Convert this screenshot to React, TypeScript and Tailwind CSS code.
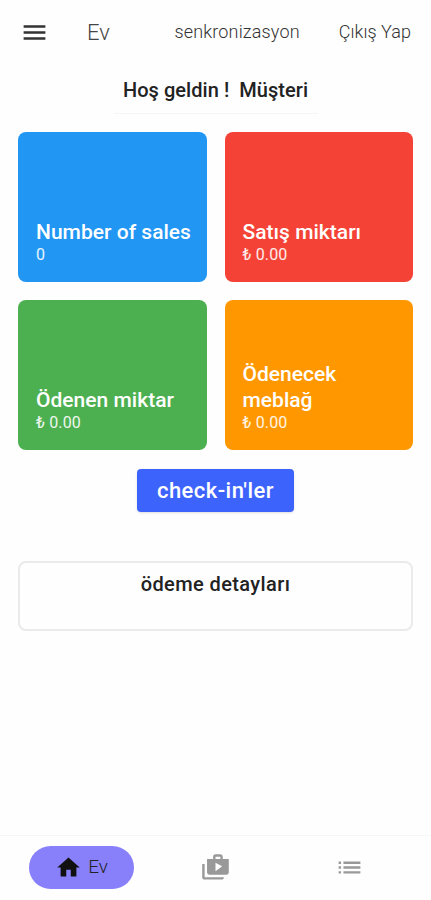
import React from 'react';
import { MdHome, MdList, MdMenu, MdShopTwo } from 'react-icons/md';

interface StatCardProps {
  title: string;
  value: string;
  color: string;
}

const stats: StatCardProps[] = [
  { title: 'Number of sales', value: '0', color: 'bg-[#2196f3]' },
  { title: 'Satış miktarı', value: '₺ 0.00', color: 'bg-[#f44336]' },
  { title: 'Ödenen miktar', value: '₺ 0.00', color: 'bg-[#4caf50]' },
  { title: 'Ödenecek meblağ', value: '₺ 0.00', color: 'bg-[#ff9800]' },
];

const StatCard: React.FC<StatCardProps> = ({ title, value, color }) => (
  <div className={`flex h-[150px] flex-col justify-end rounded-lg pb-[17px] pl-[18px] pr-3 text-white ${color}`}>
    <h2 className="text-[21px] font-medium leading-[26px] tracking-[0.02px]">{title}</h2>
    <p className="text-[16px] leading-5 tracking-[0.15px] text-white/90">{value}</p>
  </div>
);

const App: React.FC = () => {
  return (
    <div className="flex h-[900px] w-full flex-col bg-[#fefefe] font-['Roboto','Noto_Sans',sans-serif] text-[#222]">
      {/* Header */}
      <header className="flex h-16 items-center pl-5 pr-5">
        <button aria-label="Menu">
          <MdMenu className="h-[29px] w-[29px] text-[#333]" />
        </button>
        <h1 className="ml-[38px] text-[22px] font-light text-[#444]">Ev</h1>
        <nav className="ml-auto flex items-center gap-[39px] pb-0.5 text-[18px] font-light text-[#333]">
          <button className="tracking-[0.15px]">senkronizasyon</button>
          <button className="tracking-[0.05px]">Çıkış Yap</button>
        </nav>
      </header>

      <main className="flex flex-1 flex-col items-center px-[18px]">
        <div className="flex h-[50px] w-[204px] items-center justify-center border-b border-[#f5f5f5] pt-0.5">
          <p className="whitespace-pre text-[20px] font-medium tracking-[0.05px]">Hoş geldin !  Müşteri</p>
        </div>

        <div className="mt-[18px] grid w-full grid-cols-2 gap-[18px]">
          {stats.map((stat) => (
            <StatCard key={stat.title} {...stat} />
          ))}
        </div>

        <button className="mt-[19px] h-[43px] w-[157px] rounded-sm bg-[#3d63fd] text-[22px] font-medium tracking-[0.45px] text-white shadow">
          check-in'ler
        </button>

        <section className="mt-[49px] h-[70px] w-full rounded-lg border-2 border-[#eaeaea] pt-2 text-center">
          <h2 className="text-[20px] font-medium leading-[26px] tracking-[0.4px]">ödeme detayları</h2>
        </section>
      </main>

      {/* Bottom tabs */}
      <nav className="flex h-[65px] items-center border-t border-[#f6f6f6] pb-0.5 pl-[29px]">
        <button className="flex h-[43px] w-[105px] items-center justify-center gap-[6px] rounded-full bg-[#8880fb]">
          <MdHome className="h-[27px] w-[27px] text-[#111]" />
          <span className="text-[19px] font-light text-[#222]">Ev</span>
        </button>
        <button className="ml-[67px]" aria-label="Products">
          <MdShopTwo className="h-[29px] w-[29px] text-[#999]" />
        </button>
        <button className="ml-[105px]" aria-label="List">
          <MdList className="h-[29px] w-[29px] text-[#999]" />
        </button>
      </nav>
    </div>
  );
};

export default App;
